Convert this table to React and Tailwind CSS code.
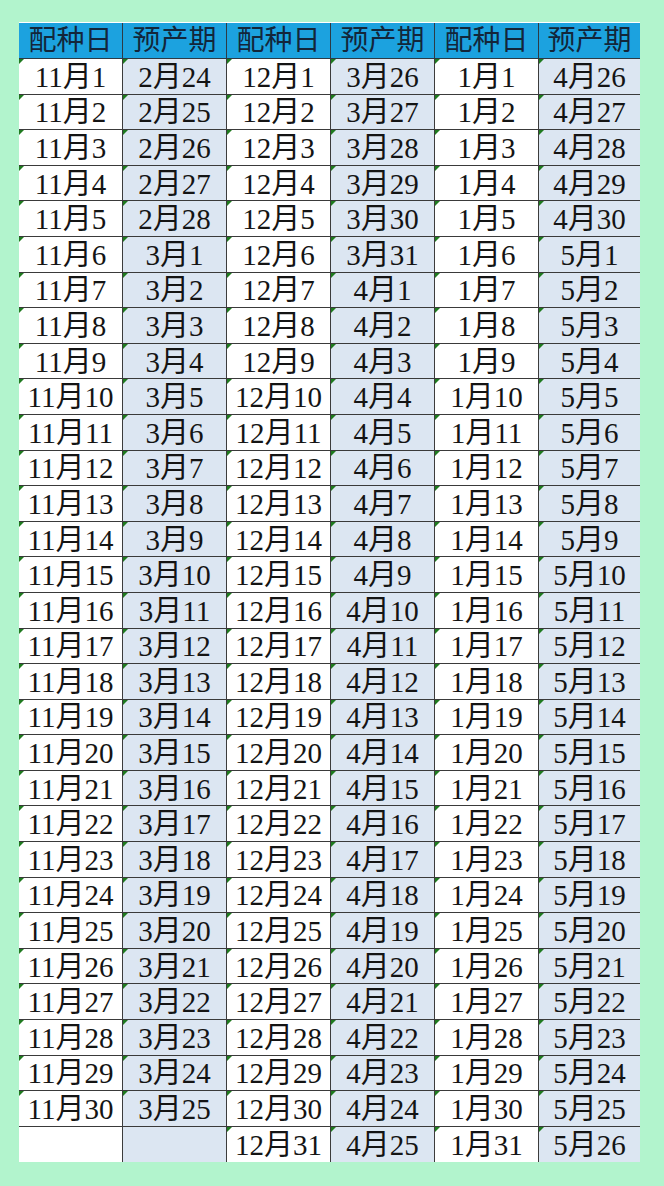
import React from "react"

const widths = ["w-[104px]", "w-[104px]", "w-[104px]", "w-[104px]", "w-[104px]", "w-[101px]"]
const heads = ["配种日", "预产期", "配种日", "预产期", "配种日", "预产期"]

function due(month, start, maxDay, i) {
  let d = start + i
  let m = month
  if (d > maxDay) {
    d -= maxDay
    m += 1
  }
  return `${m}月${d}`
}

const rows = Array.from({ length: 31 }, (_, i) => [
  i < 30 ? `11月${i + 1}` : "",
  i < 30 ? due(2, 24, 28, i) : "",
  `12月${i + 1}`,
  due(3, 26, 31, i),
  `1月${i + 1}`,
  due(4, 26, 30, i),
])

function Cell({ text, col, last }) {
  const shade = col % 2 === 1 ? "bg-[#dce6f2]" : "bg-white"
  const divider = last ? "" : "border-r border-r-[#3c3c3c]"
  return (
    <div className={`relative ${widths[col]} ${shade} ${divider} flex items-center justify-center pt-[2px]`}>
      {text && (
        <span className="absolute left-0 top-0 w-0 h-0 border-t-[5px] border-r-[5px] border-t-[#1f7a1f] border-r-transparent"></span>
      )}
      <span className="leading-none">{text}</span>
    </div>
  )
}

export default function App() {
  return (
    <div className="w-[664px] h-[1186px] bg-[#b2f4cd] pt-[22px] pl-[19px] text-[29px] text-[#141414]" style={{ fontFamily: '"Liberation Serif", "Noto Sans CJK SC", serif' }}>
      <div className="w-[621px] flex flex-col">
        <div className="flex h-[37px] border-t border-t-white bg-[#1ca2df] text-[#13263a] text-[28px] border-b border-b-[#2d3a44]">
          {heads.map((h, c) => (
            <div key={c} className={`${widths[c]} ${c < 5 ? "border-r border-r-[#2d3a44]" : ""} flex items-center justify-center leading-none`}>
              {h}
            </div>
          ))}
        </div>
        {rows.map((r, i) => (
          <div key={i} className={`flex h-[35.6px] ${i < 30 ? "border-b border-b-[#3a3a3a]" : ""}`}>
            {r.map((t, c) => (
              <Cell key={c} text={t} col={c} last={c === 5} />
            ))}
          </div>
        ))}
      </div>
    </div>
  )
}
